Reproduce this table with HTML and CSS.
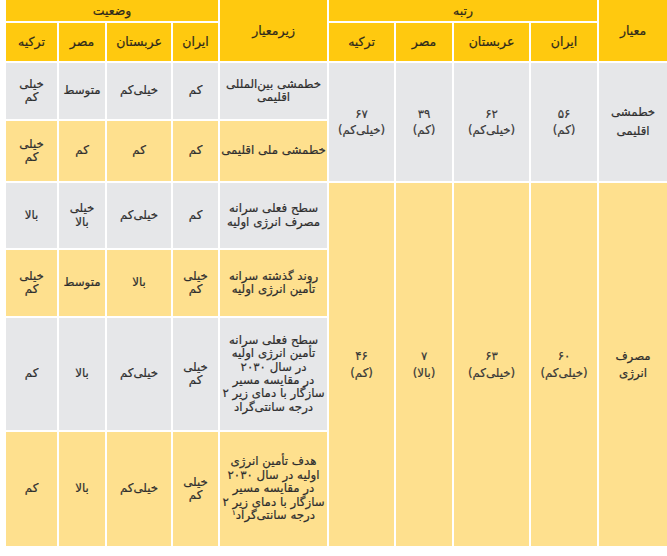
FILE: index.html
```html
<!DOCTYPE html>
<html lang="fa">
<head>
<meta charset="utf-8">
<title>جدول</title>
<link rel="stylesheet" href="styles.css">
</head>
<body>
<div class="wrap">
<table class="grid" dir="rtl">
  <colgroup>
    <col class="c-main">
    <col class="c-r-ir">
    <col class="c-r-sa">
    <col class="c-r-eg">
    <col class="c-r-tr">
    <col class="c-sub">
    <col class="c-s-ir">
    <col class="c-s-sa">
    <col class="c-s-eg">
    <col class="c-s-tr">
  </colgroup>
  <tr class="row-h1">
    <th class="hd hd-tall" rowspan="2">معیار</th>
    <th class="hd" colspan="4">رتبه</th>
    <th class="hd hd-tall" rowspan="2">زیرمعیار</th>
    <th class="hd" colspan="4">وضعیت</th>
  </tr>
  <tr class="row-h2">
    <th class="hd hd-low">ایران</th>
    <th class="hd hd-low">عربستان</th>
    <th class="hd hd-low">مصر</th>
    <th class="hd hd-low">ترکیه</th>
    <th class="hd hd-low">ایران</th>
    <th class="hd hd-low">عربستان</th>
    <th class="hd hd-low">مصر</th>
    <th class="hd hd-low">ترکیه</th>
  </tr>
  <tr class="row-1">
    <td class="gray main main-1" rowspan="2">خطمشی<br>اقلیمی</td>
    <td class="gray rank" rowspan="2">۵۶<br>(کم)</td>
    <td class="gray rank" rowspan="2">۶۲<br>(خیلی‌کم)</td>
    <td class="gray rank" rowspan="2">۳۹<br>(کم)</td>
    <td class="gray rank" rowspan="2">۶۷<br>(خیلی‌کم)</td>
    <td class="gray sub">خطمشی بین‌المللی<br>اقلیمی</td>
    <td class="gray">کم</td>
    <td class="gray">خیلی‌کم</td>
    <td class="gray">متوسط</td>
    <td class="gray">خیلی<br>کم</td>
  </tr>
  <tr class="row-2">
    <td class="light sub">خطمشی ملی اقلیمی</td>
    <td class="light">کم</td>
    <td class="light">کم</td>
    <td class="light">کم</td>
    <td class="light">خیلی<br>کم</td>
  </tr>
  <tr class="row-3">
    <td class="light main" rowspan="4">مصرف<br>انرژی</td>
    <td class="light rank" rowspan="4">۶۰<br>(خیلی‌کم)</td>
    <td class="light rank" rowspan="4">۶۳<br>(خیلی‌کم)</td>
    <td class="light rank" rowspan="4">۷<br>(بالا)</td>
    <td class="light rank" rowspan="4">۴۶<br>(کم)</td>
    <td class="gray sub">سطح فعلی سرانه<br>مصرف انرژی اولیه</td>
    <td class="gray">کم</td>
    <td class="gray">خیلی‌کم</td>
    <td class="gray">خیلی<br>بالا</td>
    <td class="gray">بالا</td>
  </tr>
  <tr class="row-4">
    <td class="light sub">روند گذشته سرانه<br>تأمین انرژی اولیه</td>
    <td class="light">خیلی<br>کم</td>
    <td class="light">بالا</td>
    <td class="light">متوسط</td>
    <td class="light">خیلی<br>کم</td>
  </tr>
  <tr class="row-5">
    <td class="gray sub">سطح فعلی سرانه<br>تأمین انرژی اولیه<br>در سال ۲۰۳۰<br>در مقایسه مسیر<br>سازگار با دمای زیر ۲<br>درجه سانتی‌گراد</td>
    <td class="gray">خیلی<br>کم</td>
    <td class="gray">خیلی‌کم</td>
    <td class="gray">بالا</td>
    <td class="gray">کم</td>
  </tr>
  <tr class="row-6">
    <td class="light sub">هدف تأمین انرژی<br>اولیه در سال ۲۰۳۰<br>در مقایسه مسیر<br>سازگار با دمای زیر ۲<br>درجه سانتی‌گراد<sup>۱</sup></td>
    <td class="light">خیلی<br>کم</td>
    <td class="light">خیلی‌کم</td>
    <td class="light">بالا</td>
    <td class="light">کم</td>
  </tr>
</table>
</div>
</body>
</html>
```
FILE: styles.css
```css
html, body {
  margin: 0;
  padding: 0;
  background: #ffffff;
  overflow: hidden;
}

.wrap {
  padding: 0;
}

.grid {
  table-layout: fixed;
  border-collapse: separate;
  border-spacing: 2px;
  width: 665px;
  margin: -2px 0 0 4px;
  font-family: "DejaVu Sans", "Noto Sans", sans-serif;
  font-size: 11.8px;
  line-height: 13.4px;
  color: #2e2e2e;
  -webkit-text-stroke: 0.2px #2e2e2e;
}

.c-main { width: 68px; }
.c-r-ir { width: 66px; }
.c-r-sa { width: 75px; }
.c-r-eg { width: 56px; }
.c-r-tr { width: 65px; }
.c-sub  { width: 107px; }
.c-s-ir { width: 45px; }
.c-s-sa { width: 64px; }
.c-s-eg { width: 46px; }
.c-s-tr { width: 51px; }

.grid th,
.grid td {
  padding: 0 1px;
  text-align: center;
  vertical-align: middle;
  font-weight: normal;
}

.hd {
  background: #ffc90f;
  color: #2f2a1c;
  -webkit-text-stroke: 0.2px #2f2a1c;
  font-size: 12.5px;
}

.hd-tall {
  padding-top: 9px;
}

.hd-low {
  padding-top: 12px;
}

.gray {
  background: #e6e7e9;
}

.light {
  background: #fee08e;
}

.rank {
  color: #3a3a3a;
  line-height: 16.5px;
  padding-top: 6px;
}

.main {
  line-height: 16.5px;
  padding-top: 4px;
}

.main-1 {
  line-height: 19px;
}

.sub sup {
  font-size: 7px;
  line-height: 0;
  vertical-align: 4px;
}

.row-h1 { height: 21px; }
.row-h2 { height: 38px; }
.row-1  { height: 56px; }
.row-2  { height: 60px; }
.row-3  { height: 65px; }
.row-4  { height: 66px; }
.row-5  { height: 112px; }
.row-6  { height: 114px; }
```
